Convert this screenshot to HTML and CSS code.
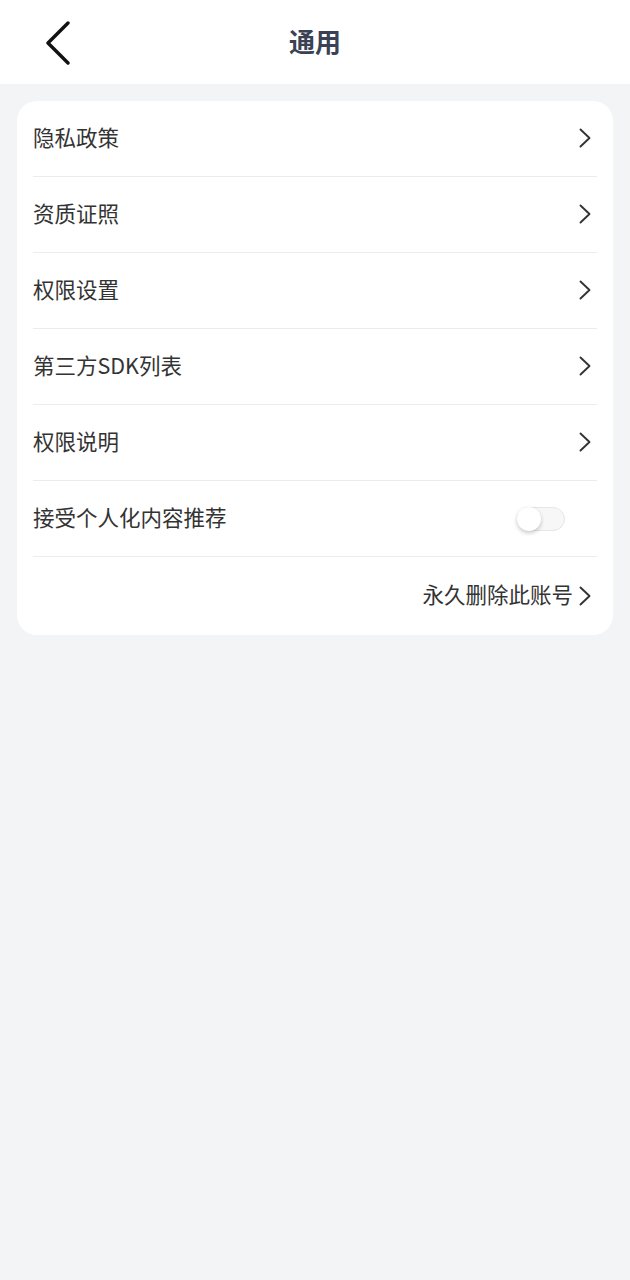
FILE: index.html
```html
<!DOCTYPE html>
<html lang="zh">
<head>
<meta charset="utf-8">
<link rel="stylesheet" href="styles.css">
</head>
<body>
<header class="nav">
  <svg class="back" width="28" height="44" viewBox="0 0 28 44"><path d="M24 2 L4 22 L24 42" fill="none" stroke="#111" stroke-width="3.4" stroke-linecap="round" stroke-linejoin="round"/></svg>
  <h1 class="title">通用</h1>
</header>
<main class="page">
  <section class="card">
    <div class="row"><span class="label">隐私政策</span><svg class="chev" width="14" height="22" viewBox="0 0 14 22"><path d="M2.5 2.5 L11.5 11 L2.5 19.5" fill="none" stroke="#333" stroke-width="1.9" stroke-linecap="round" stroke-linejoin="round"/></svg></div>
    <div class="row"><span class="label">资质证照</span><svg class="chev" width="14" height="22" viewBox="0 0 14 22"><path d="M2.5 2.5 L11.5 11 L2.5 19.5" fill="none" stroke="#333" stroke-width="1.9" stroke-linecap="round" stroke-linejoin="round"/></svg></div>
    <div class="row"><span class="label">权限设置</span><svg class="chev" width="14" height="22" viewBox="0 0 14 22"><path d="M2.5 2.5 L11.5 11 L2.5 19.5" fill="none" stroke="#333" stroke-width="1.9" stroke-linecap="round" stroke-linejoin="round"/></svg></div>
    <div class="row"><span class="label">第三方SDK列表</span><svg class="chev" width="14" height="22" viewBox="0 0 14 22"><path d="M2.5 2.5 L11.5 11 L2.5 19.5" fill="none" stroke="#333" stroke-width="1.9" stroke-linecap="round" stroke-linejoin="round"/></svg></div>
    <div class="row"><span class="label">权限说明</span><svg class="chev" width="14" height="22" viewBox="0 0 14 22"><path d="M2.5 2.5 L11.5 11 L2.5 19.5" fill="none" stroke="#333" stroke-width="1.9" stroke-linecap="round" stroke-linejoin="round"/></svg></div>
    <div class="row"><span class="label">接受个人化内容推荐</span><span class="toggle"><span class="knob"></span></span></div>
    <div class="row row-end"><span class="label">永久删除此账号</span><svg class="chev" width="14" height="22" viewBox="0 0 14 22"><path d="M2.5 2.5 L11.5 11 L2.5 19.5" fill="none" stroke="#333" stroke-width="1.9" stroke-linecap="round" stroke-linejoin="round"/></svg></div>
  </section>
</main>
</body>
</html>
```
FILE: styles.css
```css
* { box-sizing: border-box; }
html, body { margin: 0; padding: 0; }
body {
  width: 630px;
  min-height: 1280px;
  background: #f3f4f6;
  font-family: "Noto Sans CJK SC", "Noto Sans", sans-serif;
  color: #333;
}
.nav {
  height: 84px;
  background: #fff;
  display: flex;
  align-items: center;
  justify-content: center;
  position: relative;
}
.back {
  position: absolute;
  left: 44px;
  top: 21px;
}
.title {
  margin: 0 0 2px;
  font-size: 26px;
  font-weight: 700;
  color: #3a4256;
  line-height: 1;
}
.page {
  padding: 17px 17px;
}
.card {
  background: #fff;
  border-radius: 20px;
  padding: 0 16px;
}
.row {
  height: 76px;
  display: flex;
  align-items: center;
  justify-content: space-between;
  border-bottom: 1px solid #ececec;
  padding-right: 5px;
}
.row:last-child { border-bottom: none; height: 78px; }
.row-end { justify-content: flex-end; gap: 5px; }
.label {
  font-size: 21.5px;
  color: #333;
  line-height: 1;
  margin-bottom: 4px;
}
.chev { display: block; margin-bottom: 1px; }
.toggle {
  width: 48px;
  height: 24px;
  border-radius: 12px;
  background: #f7f7f7;
  border: 1px solid #e6e6e6;
  margin-right: 27px;
  position: relative;
  display: block;
}
.knob {
  position: absolute;
  left: -1px;
  top: -1px;
  width: 24px;
  height: 24px;
  border-radius: 50%;
  background: #fff;
  box-shadow: 0 2px 4px rgba(0,0,0,0.22);
}
```
